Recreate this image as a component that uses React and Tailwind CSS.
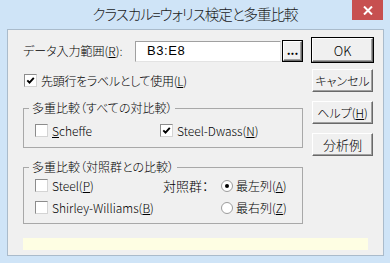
import React from "react";

const F = "font-['Noto_Sans_CJK_JP',sans-serif] [font-feature-settings:'palt'] font-light";

function Check({ checked }) {
  return (
    <span className="w-[13px] h-[13px] shrink-0 bg-white border border-t-[#8c8c8c] border-l-[#8c8c8c] border-r-[#d4d4d4] border-b-[#d4d4d4] flex items-center justify-center">
      {checked && (
        <svg width="9" height="9" viewBox="0 0 9 9">
          <path d="M1.3 4.3 L3.5 6.6 L7.8 1.8" stroke="#000" strokeWidth="1.9" fill="none" />
        </svg>
      )}
    </span>
  );
}

function Radio({ selected }) {
  return (
    <span className="w-[12px] h-[12px] shrink-0 rounded-full bg-white border border-[#9c9c9c] flex items-center justify-center">
      {selected && <span className="w-[4px] h-[4px] rounded-full bg-black" />}
    </span>
  );
}

function Btn({ children, className = "" }) {
  return (
    <div
      className={`bg-[#f0f0f0] border border-t-white border-l-white border-r-[#696969] border-b-[#696969] shadow-[inset_-1px_-1px_#a0a0a0] flex items-center justify-center text-[12px] leading-none text-black ${className}`}
    >
      {children}
    </div>
  );
}

export default function App() {
  return (
    <div className={`w-[390px] h-[263px] bg-[#cfe4f7] flex flex-col ${F}`}>
      {/* Title bar */}
      <div className="relative h-[29px] flex items-center justify-center pb-[1px]">
        <span className="text-[14.5px] tracking-[-1px] text-[#1a1a1a] leading-none">
          クラスカル=ウォリス検定と多重比較
        </span>
        <div className="absolute top-0 right-[7px] w-[31px] h-[20px] bg-[#c75050] flex items-center justify-center">
          <svg width="10" height="9" viewBox="0 0 10 9">
            <path d="M1 0.5 L9 8.5 M9 0.5 L1 8.5" stroke="#fff" strokeWidth="2" />
          </svg>
        </div>
      </div>

      {/* Client area */}
      <div className="ml-[7px] w-[377px] h-[227px] bg-[#f0f0f0] border border-[#aabbcb] flex flex-col text-[12px] text-black">
        <div className="flex items-start">
          {/* Left column */}
          <div className="w-[295px] pl-[15px] pt-[10px] flex flex-col">
            <div className="flex items-center h-[22px]">
              <span className="w-[112px] leading-none">
                データ入力範囲(<span className="underline">R</span>):
              </span>
              <div className="w-[146px] h-[21px] bg-white border border-t-[#a0a0a0] border-l-[#a0a0a0] border-r-[#e3e3e3] border-b-[#e3e3e3] flex items-center pl-[11px] text-[13px] tracking-[0.6px] font-['Liberation_Sans',sans-serif] font-normal">
                B3:E8
              </div>
              <div className="ml-[1px] w-[21px] h-[22px] border border-black">
                <Btn className="w-full h-full text-[10px] font-bold items-end pb-[4px]">...</Btn>
              </div>
            </div>

            <div className="mt-[12px] ml-[1px] flex items-center h-[13px] gap-[4px]">
              <Check checked />
              <span className="leading-none tracking-[-0.3px]">
                先頭行をラベルとして使用(<span className="underline">L</span>)
              </span>
            </div>

            {/* Group 1 */}
            <fieldset className="mt-[14px] border border-[#a8a8a8] px-0 pb-[10px]">
              <legend className="ml-[5px] px-[3px] leading-[14px]">多重比較（すべての対比較）</legend>
              <div className="mt-[9px] pl-[11px] flex items-center h-[13px]">
                <div className="w-[125px] flex items-center gap-[4px]">
                  <Check />
                  <span className="leading-none">
                    <span className="underline">S</span>cheffe
                  </span>
                </div>
                <div className="flex items-center gap-[4px]">
                  <Check checked />
                  <span className="leading-none">
                    Steel-Dwass(<span className="underline">N</span>)
                  </span>
                </div>
              </div>
            </fieldset>

            {/* Group 2 */}
            <fieldset className="mt-[12px] border border-[#a8a8a8] px-0 pb-[8px]">
              <legend className="ml-[5px] px-[3px] leading-[14px]">多重比較（対照群との比較）</legend>
              <div className="mt-[4px] pl-[11px] grid grid-cols-[128px_58px_1fr] grid-rows-[15px_15px] gap-y-[7px] items-center">
                <div className="flex items-center gap-[4px]">
                  <Check />
                  <span className="leading-none">
                    Steel(<span className="underline">P</span>)
                  </span>
                </div>
                <span className="text-[13px] leading-none">対照群：</span>
                <div className="flex items-center gap-[3px]">
                  <Radio selected />
                  <span className="leading-none">
                    最左列(<span className="underline">A</span>)
                  </span>
                </div>
                <div className="col-span-2 flex items-center gap-[4px]">
                  <Check />
                  <span className="leading-none">
                    Shirley-Williams(<span className="underline">B</span>)
                  </span>
                </div>
                <div className="flex items-center gap-[3px]">
                  <Radio />
                  <span className="leading-none">
                    最右列(<span className="underline">Z</span>)
                  </span>
                </div>
              </div>
            </fieldset>
          </div>

          {/* Right column */}
          <div className="ml-[8px] pt-[7px] flex flex-col w-[63px]">
            <div className="h-[26px] border border-black">
              <Btn className="w-full h-full text-[13px]">OK</Btn>
            </div>
            <Btn className="mt-[6px] mx-[1px] h-[23px]">キャンセル</Btn>
            <Btn className="mt-[9px] mx-[1px] h-[23px]">
              ヘルプ(<span className="underline">H</span>)
            </Btn>
            <Btn className="mt-[9px] mx-[1px] h-[23px] text-[13px]">分析例</Btn>
          </div>
        </div>

        <div className="mt-[14px] ml-[15px] w-[345px] h-[12px] bg-[#fefee3]" />
      </div>
    </div>
  );
}
